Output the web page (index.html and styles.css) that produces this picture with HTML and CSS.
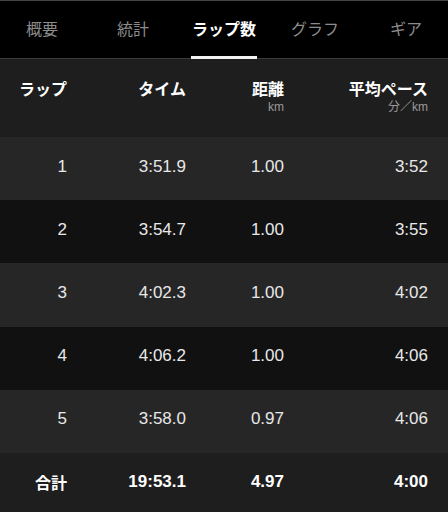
FILE: index.html
```html
<!DOCTYPE html>
<html lang="ja">
<head>
    <meta charset="UTF-8">
    <meta name="viewport" content="width=device-width, initial-scale=1.0">
    <title>ラップ数</title>
    <link rel="stylesheet" href="styles.css">
</head>
<body>
    <nav class="tabs">
        <div class="tab"><span>概要</span></div>
        <div class="tab"><span>統計</span></div>
        <div class="tab active"><span>ラップ数</span></div>
        <div class="tab"><span>グラフ</span></div>
        <div class="tab"><span>ギア</span></div>
    </nav>

    <div class="laps">
        <div class="row head">
            <div class="cell"><div class="label">ラップ</div></div>
            <div class="cell"><div class="label">タイム</div></div>
            <div class="cell"><div class="label">距離</div><div class="unit">km</div></div>
            <div class="cell"><div class="label">平均ペース</div><div class="unit">分／km</div></div>
        </div>

        <div class="row lap">
            <div class="cell">1</div><div class="cell">3:51.9</div><div class="cell">1.00</div><div class="cell">3:52</div>
        </div>
        <div class="row lap">
            <div class="cell">2</div><div class="cell">3:54.7</div><div class="cell">1.00</div><div class="cell">3:55</div>
        </div>
        <div class="row lap">
            <div class="cell">3</div><div class="cell">4:02.3</div><div class="cell">1.00</div><div class="cell">4:02</div>
        </div>
        <div class="row lap">
            <div class="cell">4</div><div class="cell">4:06.2</div><div class="cell">1.00</div><div class="cell">4:06</div>
        </div>
        <div class="row lap">
            <div class="cell">5</div><div class="cell">3:58.0</div><div class="cell">0.97</div><div class="cell">4:06</div>
        </div>

        <div class="row total">
            <div class="cell">合計</div><div class="cell">19:53.1</div><div class="cell">4.97</div><div class="cell">4:00</div>
        </div>
    </div>
</body>
</html>
```

FILE: styles.css
```css
body {
    margin: 0;
    background-color: #1e1e1e;
    color: #e6e6e6;
    font-family: "Liberation Sans", "Noto Sans CJK JP", sans-serif;
    border-top: 1px solid #444;
    overflow: hidden;
}

.tabs {
    display: grid;
    grid-template-columns: repeat(5, 91px);
    justify-content: center;
    height: 58px;
    background-color: #000;
    box-shadow: inset 0 -1px 0 #3a3a3a;
}

.tab {
    display: flex;
    justify-content: center;
    align-items: flex-end;
    font-size: 16px;
    line-height: 22px;
    color: #8c8c8c;
}

.tab span {
    padding-bottom: 15px;
    border-bottom: 3px solid transparent;
}

.tab.active {
    color: #fff;
    font-weight: bold;
}

.tab.active span {
    border-bottom-color: #f2f2f2;
    padding-left: 1px;
    padding-right: 1px;
}

.row {
    display: grid;
    grid-template-columns: 67px 119px 98px 144px;
    padding-right: 20px;
    text-align: right;
}

.head {
    height: 78px;
    box-sizing: border-box;
    padding-top: 21px;
    background-color: #1e1e1e;
}

.head .label {
    font-size: 16px;
    line-height: 20px;
    font-weight: bold;
    color: #fff;
}

.head .unit {
    font-size: 12px;
    line-height: 14px;
    color: #9a9a9a;
}

.lap {
    height: 63.2px;
    align-items: center;
    box-sizing: border-box;
    padding-bottom: 4px;
    font-size: 17px;
    color: #e8e8e8;
}

.lap:nth-child(even) {
    background-color: #262626;
}

.lap:nth-child(odd) {
    background-color: #111;
}

.total {
    height: 59px;
    align-items: center;
    font-size: 17px;
    font-weight: bold;
    color: #fff;
    background-color: #1e1e1e;
}

.total .cell:first-child {
    font-size: 16px;
}
```
